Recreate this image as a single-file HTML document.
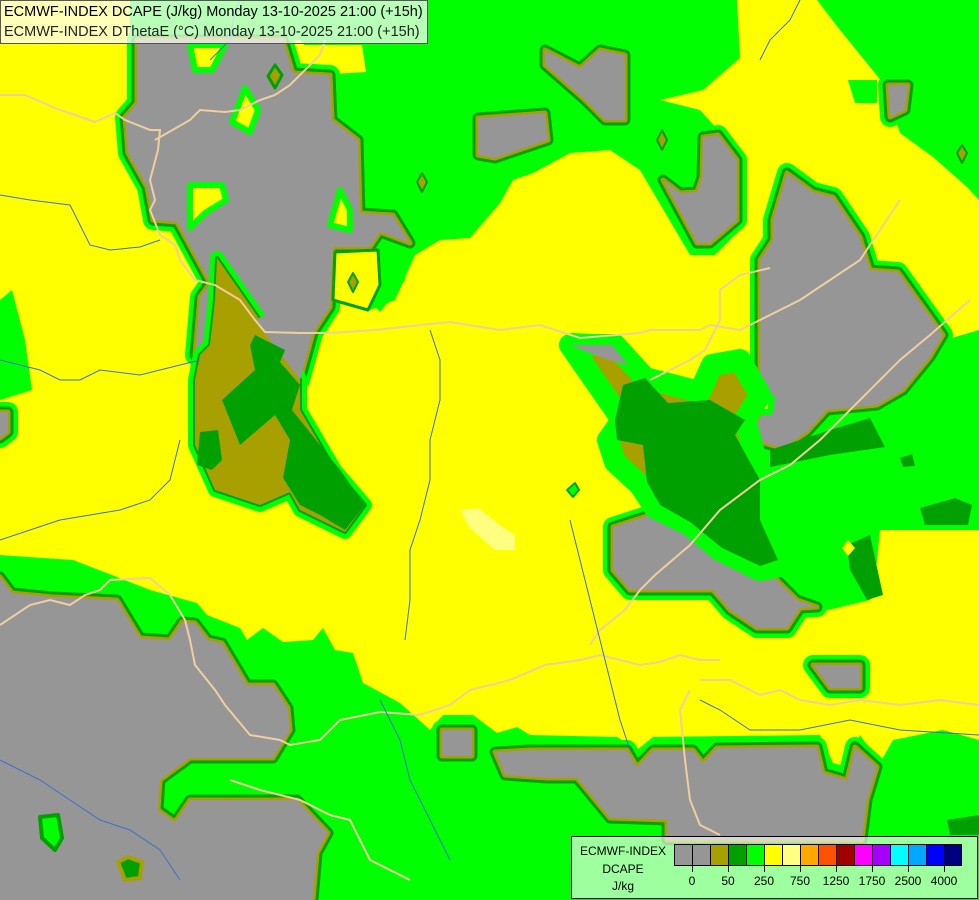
<!DOCTYPE html>
<html><head><meta charset="utf-8"><style>
html,body{margin:0;padding:0;width:979px;height:900px;overflow:hidden;background:#ffff00}
svg{position:absolute;left:0;top:0}
.hdr{position:absolute;left:0;top:0;background:rgba(255,255,255,0.72);border:1px solid #555;font-family:"Liberation Sans",sans-serif;font-size:14.5px;line-height:20px;color:#000;padding-left:3px;box-sizing:border-box;width:428px;height:44px;padding-top:1px;white-space:nowrap}
.hdr div:nth-child(2){color:#222}
.leg{position:absolute;left:571px;top:836px;width:407px;height:63px;box-sizing:border-box;border:1px solid #000;background:rgba(255,255,255,0.62);font-family:"Liberation Sans",sans-serif;font-size:12px;color:#000}
.lt{position:absolute;left:0;width:102px;text-align:center}
.bx{position:absolute;top:7px;height:22px;width:18px;box-sizing:border-box;border:1px solid #000;border-right:none}
.tk{position:absolute;top:29px;width:1px;height:6px;background:#000}
.lb{position:absolute;top:37px;width:40px;text-align:center}
</style></head><body>
<svg width="979" height="900" viewBox="0 0 979 900">
<g stroke-linejoin="round">
<polygon fill="#00ff00" points="130,0 737,0 740,58 703,90 660,100 700,110 745,160 745,225 715,255 690,255 640,170 610,150 570,153 533,173 513,180 500,203 470,238 440,240 415,255 395,300 370,310 365,250 335,240 332,75 300,40 130,40"/>
<polygon fill="#00ff00" points="817,0 979,0 979,200 967,187 933,157 900,133 883,83 840,30"/>
<polygon fill="#00ff00" points="848,80 877,80 877,103 855,103"/>
<polygon fill="#00ff00" points="0,555 73,560 117,577 150,590 197,603 207,615 240,628 247,640 263,628 283,642 313,640 323,628 335,650 353,653 363,683 400,703 430,730 443,715 473,715 497,733 517,727 530,735 617,737 637,750 653,737 820,735 833,763 847,767 860,735 880,763 893,740 943,730 979,740 979,900 0,900"/>
<polygon fill="#00ff00" points="700,420 760,445 820,420 900,395 945,340 979,330 979,530 880,530 875,580 870,600 820,612 770,565 700,525 690,460"/>
<polygon fill="#00ff00" points="0,300 12,290 25,340 32,390 0,400"/>
<polygon fill="#00ff00" points="0,405 12,410 8,440 0,445"/>
<polygon fill="#00ff00" points="365,245 410,245 405,280 380,312 368,300"/>
<polygon fill="#ffff00" points="300,45 362,45 366,72 300,76"/>
<g id="grays">
<polygon points="137,40 283,40 293,73 330,75 332,120 358,140 360,213 393,215 410,243 380,232 370,247 333,247 330,307 313,333 300,380 285,340 260,330 215,330 205,355 195,355 200,297 210,283 177,222 153,220 147,187 128,153 125,117 137,103"/>
<polygon points="773,240 773,220 787,173 813,192 833,197 860,237 870,270 898,272 943,335 930,357 903,390 877,405 827,410 807,432 783,448 763,443 757,423 770,400 760,373 760,260"/>
<polygon points="703,137 718,135 737,160 737,220 710,243 697,243 663,180 680,193 697,192 702,177"/>
<polygon points="545,50 580,68 600,50 625,55 625,120 605,120 585,100 545,65"/>
<polygon points="478,118 545,113 548,140 495,158 478,155"/>
<polygon points="888,85 908,85 905,110 890,117"/>
<polygon points="613,527 650,515 680,518 700,537 727,558 760,563 797,600 817,607 800,608 787,628 757,628 730,610 713,590 630,590 613,570"/>
<polygon points="813,665 860,665 860,688 830,688"/>
<polygon points="442,730 472,730 472,756 442,756"/>
<polygon points="495,752 530,750 627,750 637,767 653,750 693,750 703,763 717,748 817,747 823,773 847,780 855,747 877,767 867,800 862,840 667,840 667,820 610,818 577,778 547,778 505,775"/>
<polygon points="0,577 12,593 53,597 117,600 140,638 170,640 182,622 195,623 208,640 222,643 247,685 273,685 288,708 290,730 273,758 190,758 160,780 158,810 175,822 190,800 297,800 328,833 317,853 313,900 0,900"/>
<polygon points="573,343 610,345 622,358 590,356"/>
<polygon points="0,412 8,412 8,432 0,438"/>
</g>
<use href="#grays" fill="none" stroke="#00ff00" stroke-width="20"/>
<use href="#grays" fill="none" stroke="#00a000" stroke-width="11"/>
<use href="#grays" fill="none" stroke="#a8a000" stroke-width="5"/>
<use href="#grays" fill="#969696" stroke="none"/>
<g fill="#ffff00" stroke="#00a000" stroke-width="3">
<polygon points="190,45 225,45 212,70 195,70" />
<polygon points="245,88 258,110 250,132 232,122" />
<polygon points="190,185 222,185 226,200 205,213 190,228" />
<polygon points="340,190 350,210 350,230 330,225" />
<polygon points="335,252 378,250 380,285 368,310 333,300" />
</g>
<g fill="none" stroke="#00ff00" stroke-width="6">
<polygon points="190,45 225,45 212,70 195,70" />
<polygon points="245,88 258,110 250,132 232,122" />
<polygon points="190,185 222,185 226,200 205,213 190,228" />
<polygon points="340,190 350,210 350,230 330,225" />
</g>
<polygon points="760,390 772,398 770,412 754,412 748,400" fill="#ffff00" stroke="#00ff00" stroke-width="6"/>
<polygon points="275,65 282,75 275,88 268,76" fill="#a8a000" stroke="#00a000" stroke-width="3"/>
<polygon points="353,273 358,282 353,292 348,282" fill="#a8a000" stroke="#00a000" stroke-width="2"/>
<polygon points="422,173 427,182 422,192 417,182" fill="#a8a000" stroke="#00a000" stroke-width="2"/>
<polygon points="662,130 667,140 662,150 657,140" fill="#a8a000" stroke="#00a000" stroke-width="2"/>
<polygon points="962,145 967,153 962,163 957,153" fill="#a8a000" stroke="#00a000" stroke-width="2"/>
<polygon fill="#a8a000" stroke="#00ff00" stroke-width="14" points="217,258 260,320 290,355 300,380 300,410 335,470 365,505 345,532 300,510 290,492 260,505 215,490 195,445 195,380 200,355 210,345 215,300"/>
<polygon fill="#a8a000" stroke="#00a000" stroke-width="4" points="217,258 260,320 290,355 300,380 300,410 335,470 365,505 345,532 300,510 290,492 260,505 215,490 195,445 195,380 200,355 210,345 215,300"/>
<polygon fill="#a8a000" points="217,258 260,320 290,355 300,380 300,410 335,470 365,505 345,532 300,510 290,492 260,505 215,490 195,445 195,380 200,355 210,345 215,300"/>
<polygon fill="#969696" points="255,320 300,380 312,335 295,300"/>
<polygon fill="#00a000" points="255,335 285,350 280,362 300,385 292,410 340,470 365,505 345,530 320,515 300,505 283,478 290,440 275,415 240,445 222,400 255,370 250,345"/>
<polygon fill="#00a000" points="200,432 218,430 222,460 212,470 197,465"/>
<polygon fill="#a8a000" stroke="#00ff00" stroke-width="22" points="570,345 615,345 645,378 700,392 712,365 740,360 760,395 745,420 760,475 760,520 785,565 760,570 720,550 690,525 655,508 640,485 615,462 608,440 622,420"/>
<polygon fill="#00a000" points="623,385 645,378 668,403 710,400 745,420 735,435 760,480 760,520 778,560 760,566 722,548 690,522 660,505 647,482 643,445 617,440 615,420"/>
<polygon fill="#969696" points="570,345 612,345 628,365 600,357"/>
<polygon fill="#00a000" points="770,450 830,430 870,418 885,447 830,455 770,467"/>
<polygon fill="#00a000" points="847,545 870,535 883,595 867,600 850,570"/>
<polygon fill="#ffff00" points="848,540 855,548 848,556 842,548"/>
<polygon fill="#00a000" points="920,508 955,498 972,505 968,525 925,525"/>
<polygon fill="#00a000" points="900,458 912,454 915,466 903,467"/>
<polygon fill="#00a000" points="707,440 716,448 708,455 700,448"/>
<polygon fill="#00ff00" points="575,483 579,490 573,497 567,490" stroke="#00a000" stroke-width="2"/>
<polygon fill="#ffff00" points="880,533 933,537 933,560 947,577 953,620 979,623 979,540"/>
<polygon fill="#ffff80" points="460,510 478,508 500,525 515,535 515,550 495,550 470,528"/>
<polygon fill="#00ff00" stroke="#00a000" stroke-width="4" points="40,817 58,815 62,838 55,850 42,838"/>
<polygon fill="#00a000" stroke="#a8a000" stroke-width="4" points="118,862 128,857 142,862 140,878 125,880"/>
<polygon fill="#00a000" points="947,820 979,815 979,835 950,835"/>
</g>
<g fill="none" stroke="#eecfa0" stroke-width="2">
<polyline points="0,95 25,95 60,110 95,122 115,113 125,120 150,130 160,130 158,150 150,180 155,200 150,210 160,235 175,245 180,260 195,280 215,285 240,300 255,320 265,332 300,333 330,333 375,330 420,325 450,322"/>
<polyline points="155,140 190,120 200,110 225,112 240,110 260,100 275,95 290,85 300,75 310,65 320,55 325,40"/>
<polyline points="450,322 500,330 540,325 580,338 640,333 650,330 700,330 710,325 740,330 760,320 800,300 830,280 860,260 880,230 900,200"/>
<polyline points="0,625 30,605 50,600 70,605 85,595 100,590 110,580 150,578 170,595 185,620 190,640 195,665 215,690 225,705 250,735 280,740 290,745 320,740 340,720 380,712 420,715 450,705 470,690 510,680 545,665 580,660 600,655 640,665 660,662 680,655 700,660 720,660"/>
<polyline points="590,645 600,630 625,610 640,590 655,575 690,545 720,510 760,480 790,465 820,440 840,420 860,400 880,380 900,360 930,335 970,300"/>
<polyline points="650,380 670,370 690,360 705,350 720,320 720,290 740,275 770,268"/>
<polyline points="700,680 730,680 760,695 780,690 800,700 830,705 860,700 900,705 940,700 979,705"/>
<polyline points="230,780 260,790 300,800 330,815 350,820 360,840 370,860 390,870 410,880"/>
<polyline points="690,690 680,710 685,760 690,800 700,825 720,835"/>
</g>
<g fill="none" stroke="#3a6fd0" stroke-width="1">
<polyline points="0,195 30,200 70,205 75,215 90,245 110,250 140,247 160,240"/>
<polyline points="0,360 40,370 60,380 80,380 100,370 140,375 180,365 200,360"/>
<polyline points="0,540 30,530 60,520 120,510 150,500 170,480 180,440"/>
<polyline points="210,60 230,40 235,10 240,0"/>
<polyline points="430,330 440,360 440,400 430,440 430,480 420,520 410,550 410,600 405,640"/>
<polyline points="570,520 580,560 590,600 600,640 610,680 620,720 630,750"/>
<polyline points="700,700 720,710 750,730 800,730 850,720 900,730 979,735"/>
<polyline points="0,760 40,780 70,800 100,820 130,830 160,850 180,880"/>
<polyline points="380,700 400,740 410,780 430,820 450,860"/>
<polyline points="760,60 770,40 790,20 800,0"/>
</g>
</svg>
<div class="hdr"><div>ECMWF-INDEX DCAPE (J/kg) Monday 13-10-2025 21:00 (+15h)</div><div>ECMWF-INDEX DThetaE (°C) Monday 13-10-2025 21:00 (+15h)</div></div>
<div class="leg">
<div class="lt" style="top:7px">ECMWF-INDEX</div>
<div class="lt" style="top:25px">DCAPE</div>
<div class="lt" style="top:42px">J/kg</div>
<div class="bx" style="left:102px;background:#969696"></div>
<div class="bx" style="left:120px;background:#969696"></div>
<div class="bx" style="left:138px;background:#a8a000"></div>
<div class="bx" style="left:156px;background:#00a000"></div>
<div class="bx" style="left:174px;background:#00ff00"></div>
<div class="bx" style="left:192px;background:#ffff00"></div>
<div class="bx" style="left:210px;background:#ffff80"></div>
<div class="bx" style="left:228px;background:#ffa800"></div>
<div class="bx" style="left:246px;background:#ff5000"></div>
<div class="bx" style="left:264px;background:#a00000"></div>
<div class="bx" style="left:282px;background:#ff00ff"></div>
<div class="bx" style="left:300px;background:#a800ff"></div>
<div class="bx" style="left:318px;background:#00ffff"></div>
<div class="bx" style="left:336px;background:#00a8ff"></div>
<div class="bx" style="left:354px;background:#0000ff"></div>
<div class="bx" style="left:372px;background:#000080;border-right:1px solid #000"></div>
<div class="tk" style="left:120px"></div><div class="tk" style="left:156px"></div><div class="tk" style="left:192px"></div><div class="tk" style="left:228px"></div><div class="tk" style="left:264px"></div><div class="tk" style="left:300px"></div><div class="tk" style="left:336px"></div><div class="tk" style="left:372px"></div>
<div class="lb" style="left:100px">0</div><div class="lb" style="left:136px">50</div><div class="lb" style="left:172px">250</div><div class="lb" style="left:208px">750</div><div class="lb" style="left:244px">1250</div><div class="lb" style="left:280px">1750</div><div class="lb" style="left:316px">2500</div><div class="lb" style="left:352px">4000</div>
</div>
</body></html>
